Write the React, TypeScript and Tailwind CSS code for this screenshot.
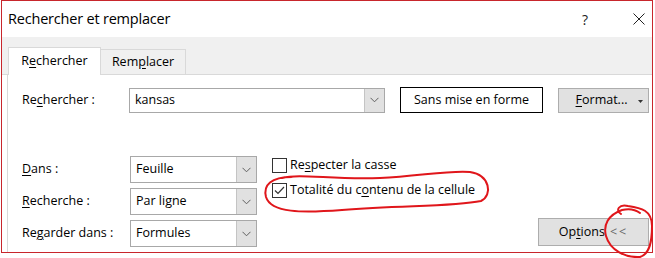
import React from "react";

const Chevron = () => (
  <svg width="9" height="6" viewBox="0 0 9 6" fill="none">
    <path d="M0.5 0.8 L4.5 4.8 L8.5 0.8" stroke="#5f5f5f" strokeWidth="1" />
  </svg>
);

const Select = ({ value }: { value: string }) => (
  <div className="flex h-[27px] w-[127px] border border-[#a8a8a8] bg-white">
    <div className="flex flex-1 items-center pl-[5px]">{value}</div>
    <div className="flex w-[20px] items-center justify-center border-l border-[#c4c4c4] bg-[#e1e1e1]">
      <Chevron />
    </div>
  </div>
);

const Check = ({ checked, children }: { checked?: boolean; children: React.ReactNode }) => (
  <div className="flex h-[15px] items-center">
    <div className="flex h-[15px] w-[15px] items-center justify-center border border-[#333] bg-white">
      {checked && (
        <svg width="11" height="9" viewBox="0 0 11 9" fill="none">
          <path d="M1 4.5 L4 7.5 L10 1" stroke="#333" strokeWidth="1.2" />
        </svg>
      )}
    </div>
    <span className="ml-[3px]">{children}</span>
  </div>
);

export default function App() {
  return (
    <div className="relative h-[258px] w-[655px] bg-white font-['Open_Sans',sans-serif] text-[12.5px] text-black">
      <div className="ml-[1px] flex h-[253px] w-[652px] flex-col border border-[#c8262c] bg-white">
        {/* title bar */}
        <div className="flex h-[36px] shrink-0 items-center pl-[6px]">
          <span className="text-[14.5px] tracking-[-0.2px]">Rechercher et remplacer</span>
          <span className="ml-auto mr-[45px] text-[14px] text-[#222]">?</span>
          <svg width="12" height="12" viewBox="0 0 12 12" className="mr-[7px]">
            <path d="M0.5 0.5 L11.5 11.5 M11.5 0.5 L0.5 11.5" stroke="#222" strokeWidth="1" />
          </svg>
        </div>

        {/* tabs */}
        <div className="flex h-[38px] shrink-0 items-end border-b border-[#d9d9d9] bg-[#f0f0f0] pl-[6px]">
          <div className="-mb-px flex h-[28px] w-[93px] items-center justify-center border border-b-0 border-[#d9d9d9] bg-white pb-[1px]">
            R<u className="underline-offset-2">e</u>chercher
          </div>
          <div className="flex h-[25px] w-[85px] items-center justify-center border border-b-0 border-l-0 border-[#d9d9d9] bg-[#f0f0f0]">
            Rem<u className="underline-offset-2">p</u>lacer
          </div>
        </div>

        {/* panel */}
        <div className="ml-[5px] flex flex-1 flex-col border-l border-[#d9d9d9] pl-[14px] pr-[3px]">
          <div className="mt-[12px] flex h-[26px] items-center">
            <div className="w-[107px]">
              Re<u className="underline-offset-2">c</u>hercher :
            </div>
            <div className="flex h-[25px] w-[256px] border border-[#a8a8a8] bg-white">
              <div className="flex flex-1 items-center pl-[5px]">kansas</div>
              <div className="flex w-[20px] items-center justify-center border-l border-[#c4c4c4] bg-[#e1e1e1]">
                <Chevron />
              </div>
            </div>
            <div className="ml-[15px] flex h-[26px] w-[143px] items-center justify-center border border-black bg-white">
              Sans mise en forme
            </div>
            <div className="relative ml-[15px] flex h-[25px] w-[91px] items-center justify-center border border-[#adadad] bg-[#e1e1e1] pr-[4px]">
              <span>
                <u className="underline-offset-2">F</u>ormat...
              </span>
              <svg width="5" height="3" viewBox="0 0 5 3" className="absolute right-[5px] top-[11px]">
                <path d="M0 0 L5 0 L2.5 3 Z" fill="#333" />
              </svg>
            </div>
          </div>

          <div className="mt-[43px] flex">
            <div className="flex flex-col gap-[5px]">
              <div className="flex items-center">
                <div className="w-[108px]">
                  <u className="underline-offset-2">D</u>ans :
                </div>
                <Select value="Feuille" />
              </div>
              <div className="flex items-center">
                <div className="w-[108px]">
                  <u className="underline-offset-2">R</u>echerche :
                </div>
                <Select value="Par ligne" />
              </div>
              <div className="flex items-center">
                <div className="w-[108px]">
                  Re<u className="underline-offset-2">g</u>arder dans :
                </div>
                <Select value="Formules" />
              </div>
            </div>

            <div className="ml-[15px] flex flex-col gap-[10px] pt-[2px]">
              <Check>
                Re<u className="underline-offset-2">s</u>pecter la casse
              </Check>
              <Check checked>
                Totalité du c<u className="underline-offset-2">o</u>ntenu de la cellule
              </Check>
            </div>

            <div className="ml-auto flex items-end pb-[1px]">
              <div className="flex h-[28px] w-[111px] items-center justify-center border border-[#adadad] bg-[#e1e1e1]">
                Op<u className="underline-offset-2">t</u>ions
                <span className="ml-[5px] tracking-[2px] text-[#6a6a6a]">&lt;&lt;</span>
              </div>
            </div>
          </div>
        </div>
      </div>

      {/* red hand-drawn annotations */}
      <svg className="pointer-events-none absolute inset-0" width="655" height="258" viewBox="0 0 655 258" fill="none">
        <path
          d="M282 178 C300 173 332 180 380 178 C420 176 450 170 470 172 C490 175 493 195 481 201 C452 207 402 205 342 210 C302 213 271 213 266 197 C263 185 271 177 292 177"
          stroke="#e0161b"
          strokeWidth="2"
          strokeLinecap="round"
        />
        <path
          d="M621 214 C615 210 619 204 628 206 C641 208 652 210 652 226 C652 241 650 254 640 257 C625 258 610 250 606 236 C603 225 608 215 622 210 C630 208 636 210 640 213"
          stroke="#e0161b"
          strokeWidth="2"
          strokeLinecap="round"
        />
      </svg>
    </div>
  );
}
